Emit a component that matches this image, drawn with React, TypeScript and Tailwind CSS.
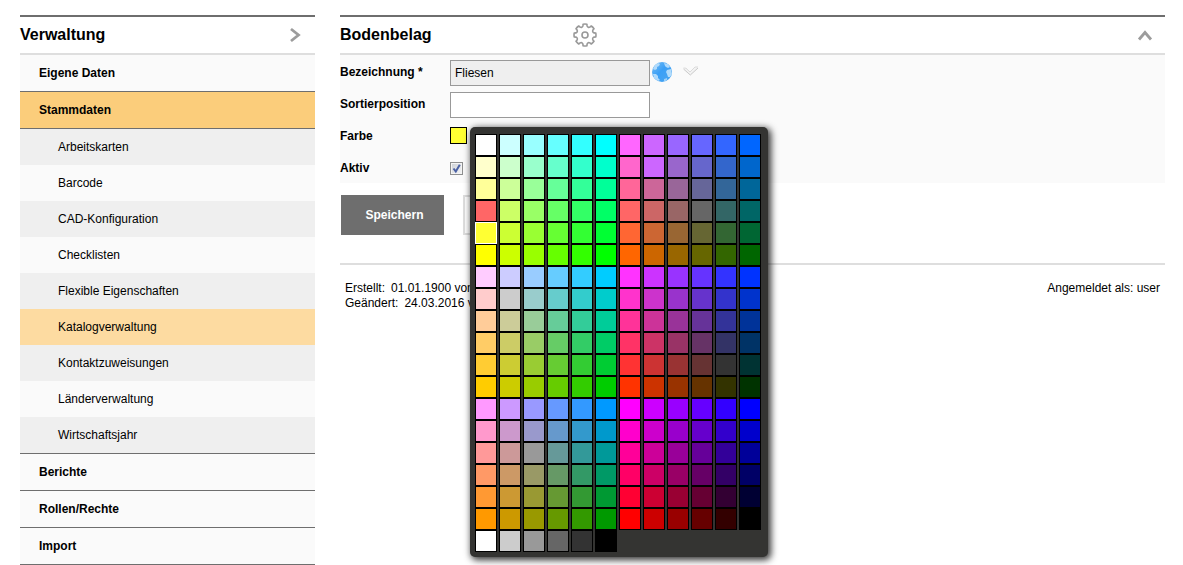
import { useState } from "react";

const LEVELS = ["ff", "cc", "99", "66", "33", "00"];
const GREYS = ["#ffffff", "#cccccc", "#999999", "#666666", "#333333", "#000000"];
const OVERRIDES: Record<string, string> = { "3-0": "#ff6666", "1-7": "#cc66ff" };

// Three blocks of six rows; green is fixed per half block, blue falls by row, red by column.
const PALETTE: string[] = [];
for (let row = 0; row < 18; row++) {
  for (let col = 0; col < 12; col++) {
    const green = LEVELS[Math.floor(row / 6) + (col < 6 ? 0 : 3)];
    PALETTE.push(OVERRIDES[`${row}-${col}`] ?? `#${LEVELS[col % 6]}${green}${LEVELS[row % 6]}`);
  }
}
PALETTE.push(...GREYS);

const SUB_ITEMS = [
  "Arbeitskarten",
  "Barcode",
  "CAD-Konfiguration",
  "Checklisten",
  "Flexible Eigenschaften",
  "Katalogverwaltung",
  "Kontaktzuweisungen",
  "Länderverwaltung",
  "Wirtschaftsjahr",
];

function MainItem({ label, active = false }: { label: string; active?: boolean }) {
  return (
    <a
      href="#"
      className={`block border-b border-[#6e6e6e] pl-[19px] font-bold leading-9 ${active ? "bg-[#fbcd7b]" : "bg-[#fafafa]"}`}
    >
      {label}
    </a>
  );
}

function Sidebar() {
  return (
    <nav className="w-[295px] shrink-0">
      <div className="flex h-10 items-center justify-between border-y-2 border-t-[#6e6e6e] border-b-[#dedede] pr-[14px]">
        <h2 className="text-base font-bold">Verwaltung</h2>
        <svg width="12" height="16" viewBox="0 0 12 16" fill="none" stroke="#9c9c9c" strokeWidth="2.8">
          <path d="M2 2 9.5 8 2 14" />
        </svg>
      </div>
      <MainItem label="Eigene Daten" />
      <MainItem label="Stammdaten" active />
      <ul className="border-b border-[#6e6e6e]">
        {SUB_ITEMS.map((item, i) => (
          <li key={item}>
            <a
              href="#"
              className={`block pl-[38px] leading-9 ${
                item === "Katalogverwaltung" ? "bg-[#fddba1]" : i % 2 === 0 ? "bg-[#efefef]" : "bg-[#fafafa]"
              }`}
            >
              {item}
            </a>
          </li>
        ))}
      </ul>
      <MainItem label="Berichte" />
      <MainItem label="Rollen/Rechte" />
      <MainItem label="Import" />
    </nav>
  );
}

// Outline of a cog with eight teeth, centred on 12,12.
function cogPath() {
  const at = (deg: number, r: number) => {
    const a = ((deg - 90) * Math.PI) / 180;
    return `${(12 + r * Math.cos(a)).toFixed(2)} ${(12 + r * Math.sin(a)).toFixed(2)}`;
  };
  let d = `M${at(-13, 9.3)}`;
  for (let k = 0; k < 8; k++) {
    const c = k * 45;
    d += `L${at(c - 10, 11)}A11 11 0 0 1 ${at(c + 10, 11)}L${at(c + 13, 9.3)}Q${at(c + 22.5, 7.6)} ${at(c + 32, 9.3)}`;
  }
  return d + "Z";
}

function Cog() {
  return (
    <svg width="24" height="24" viewBox="0 0 24 24" fill="none" stroke="#999999" strokeWidth="1.6" strokeLinejoin="round" className="block">
      <path d={cogPath()} />
      <circle cx="12" cy="12" r="3" />
    </svg>
  );
}

function Globe() {
  return (
    <svg width="20" height="20" viewBox="0 0 20 20" className="block">
      <defs>
        <linearGradient id="sea" x1="0" y1="0" x2="1" y2="1">
          <stop offset="0" stopColor="#7cc0f3" />
          <stop offset="0.45" stopColor="#3a9ff6" />
          <stop offset="1" stopColor="#4aa6f0" />
        </linearGradient>
        <clipPath id="disc">
          <circle cx="10" cy="10" r="10" />
        </clipPath>
      </defs>
      <circle cx="10" cy="10" r="10" fill="url(#sea)" />
      <g clipPath="url(#disc)" fill="#d5edfe">
        <path d="M3 3 6 1 8 2 7 4 5 5 5 7 3 8 1 7Z" opacity="0.7" />
        <path d="M1 12 4 12 6 14 6 16 8 18 6 19 2 16Z" opacity="0.75" />
        <path d="M12 1 16 2 18 5 16 6 14 5 13 4Z" opacity="0.75" />
        <path d="M15 8 19 7 20 12 18 15 16 15 15 12 14 10Z" opacity="0.75" />
        <path d="M12 17 15 16 15 18 12 20Z" opacity="0.6" />
      </g>
    </svg>
  );
}

function Picker({ value, onPick }: { value: string; onPick: (color: string) => void }) {
  return (
    <div className="absolute left-5 top-0 z-10 grid w-max grid-cols-12 gap-x-[2px] rounded-[5px] bg-[#343432] pb-[5px] pl-[5px] pr-[7px] pt-[7px] shadow-[2px_2px_7px_1px_rgba(0,0,0,0.8)]">
      {PALETTE.map((color, i) => (
        <button
          key={i}
          type="button"
          aria-label={color}
          onClick={() => onPick(color)}
          style={{ backgroundColor: color }}
          className={`size-[22px] border ${color === value ? "border-white" : "border-black"}`}
        />
      ))}
    </div>
  );
}

export default function App() {
  const [color, setColor] = useState("#ffff33");
  const [active, setActive] = useState(true);
  const [name, setName] = useState("Fliesen");
  const [position, setPosition] = useState("");
  const label = "w-[110px] shrink-0 self-start font-bold leading-6";
  const field = "h-[26px] w-[200px] border border-[#999999] px-1";

  return (
    <div className="flex gap-[25px] bg-white pl-5 pr-[18px] pt-[15px] font-['Liberation_Sans',Arial,sans-serif] text-xs text-black">
      <Sidebar />
      <main className="min-w-0 flex-1">
        <header className="grid h-10 grid-cols-[233px_1fr_auto] items-center border-y-2 border-t-[#6e6e6e] border-b-[#dedede] pr-3">
          <h1 className="text-base font-bold">Bodenbelag</h1>
          <button type="button" aria-label="Einstellungen" className="justify-self-start">
            <Cog />
          </button>
          <button type="button" aria-label="Einklappen">
            <svg width="16" height="12" viewBox="0 0 16 12" fill="none" stroke="#9c9c9c" strokeWidth="2.8" className="block">
              <path d="M2 10.5 8 3.5 14 10.5" />
            </svg>
          </button>
        </header>

        <form onSubmit={(e) => e.preventDefault()}>
          <div className="flex flex-col gap-[6px] bg-[#fafafa] pb-px pt-[5px]">
            <div className="flex h-[26px] items-center">
              <label htmlFor="name" className={label}>
                Bezeichnung *
              </label>
              <input id="name" value={name} onChange={(e) => setName(e.target.value)} className={`${field} bg-[#efefef]`} />
              <button type="button" aria-label="Sprache" className="ml-[2px] mr-[11px] self-start pt-[2px]">
                <Globe />
              </button>
              <svg width="16" height="12" viewBox="0 0 16 12" fill="none" className="mt-[5px] self-start">
                <path d="M0.5 3.5 3 3 7 7 12.5 2 15 2.5 7.5 10Z" fill="#f3f3f3" />
                <path d="M0.5 4 7.3 10 15 3" stroke="#c9c9c9" />
                <path d="M0.5 3 3 3.2 7 7 12 2 15 2" stroke="#dadada" />
              </svg>
            </div>
            <div className="flex h-[26px] items-center">
              <label htmlFor="position" className={label}>
                Sortierposition
              </label>
              <input id="position" value={position} onChange={(e) => setPosition(e.target.value)} className={`${field} bg-white`} />
            </div>
            <div className="flex h-[26px] items-start">
              <span className={label}>Farbe</span>
              <div className="relative mt-[3px]">
                <button
                  type="button"
                  aria-label="Farbe"
                  style={{ backgroundColor: color }}
                  className="block size-[17px] border border-black"
                />
                <Picker value={color} onPick={setColor} />
              </div>
            </div>
            <div className="flex h-[26px] items-start">
              <label htmlFor="active" className={label}>
                Aktiv
              </label>
              <div className="relative mt-[6px] size-[13px]">
                <input
                  id="active"
                  type="checkbox"
                  checked={active}
                  onChange={(e) => setActive(e.target.checked)}
                  className="peer block size-[13px] appearance-none border border-[#8e8f8f] bg-linear-to-br from-[#cbcfd5] to-[#f6f6f6] shadow-[inset_0_0_0_1px_#f4f4f4]"
                />
                <svg
                  width="13"
                  height="13"
                  viewBox="0 0 13 13"
                  fill="none"
                  stroke="#4b61a4"
                  strokeWidth="2"
                  className="pointer-events-none absolute inset-0 hidden peer-checked:block"
                >
                  <path d="M3.5 6.5 5.8 9.5 9.8 2.8" />
                </svg>
              </div>
            </div>
          </div>

          <div className="flex gap-[19px] pb-7 pl-px pt-3">
            <button type="submit" className="h-10 w-[103px] bg-[#6e6e6e] pl-1 font-bold text-white">
              Speichern
            </button>
            <button type="button" aria-label="Abbrechen" className="h-10 w-[103px] border-2 border-[#dedede] bg-white" />
          </div>
        </form>

        <footer className="flex items-start justify-between border-t-2 border-[#dedede] px-[5px] pt-4 leading-[15px]">
          <div>
            <p className="flex gap-[6px]">
              <span>Erstellt:</span>
              <span>01.01.1900 von</span>
            </p>
            <p className="flex gap-[6px]">
              <span>Geändert:</span>
              <span>24.03.2016 von</span>
            </p>
          </div>
          <p>Angemeldet als: user</p>
        </footer>
      </main>
    </div>
  );
}
